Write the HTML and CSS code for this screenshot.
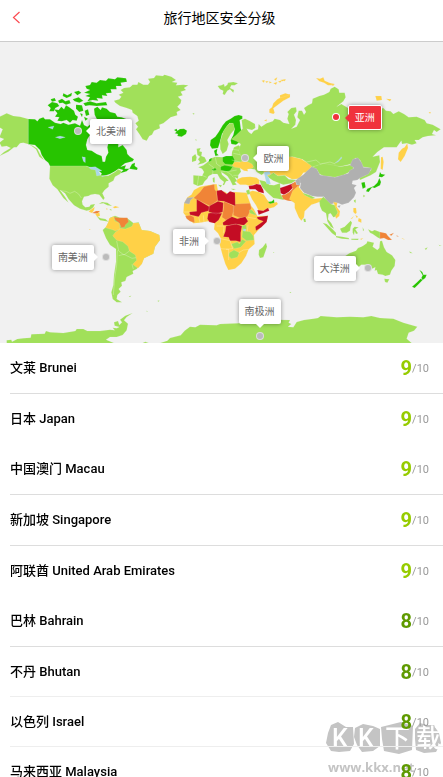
FILE: index.html
```
<!DOCTYPE html>
<html lang="zh-CN">
<head>
  <meta charset="utf-8">
  <meta name="viewport" content="width=device-width, initial-scale=1">
  <title>旅行地区安全分级</title>
  <link rel="stylesheet" href="styles.css">
</head>
<body>
  <header class="topbar">
    <button class="back" type="button" aria-label="返回">
      <svg width="9" height="13" viewBox="0 0 9 13"><path d="M7.5 1 L1.5 6.5 L7.5 12"/></svg>
    </button>
    <h1>旅行地区安全分级</h1>
  </header>

  <section class="map">
    <svg class="world" viewBox="0 126 1329 903" aria-hidden="true">
      <!-- North America -->
      <g transform="translate(0 180)">
        <path class="ok" d="M-2 170 L8 166 20 160 40 168 60 170 85 177 85 253 98 257 112 266 120 282 132 300 118 290 108 268 98 260 86 253 70 248 60 250 50 262 42 262 25 275 -2 288 12 276 32 264 20 258 5 260 -2 248 12 237 -2 232 8 208 -2 202Z"/>
        <path class="safe" d="M85 177 L105 178 112 184 118 176 130 172 135 178 150 178 165 188 182 192 190 188 205 194 225 190 240 197 246 180 252 195 262 200 275 190 290 210 270 225 262 238 258 255 262 270 275 272 290 282 305 288 308 305 315 305 318 290 325 278 322 262 325 250 340 245 355 250 355 262 368 255 380 270 382 282 390 290 402 298 398 304 375 310 362 320 378 316 374 326 388 326 396 312 405 308 404 318 413 324 411 330 388 326 380 334 360 340 370 330 356 326 345 334 330 342 312 348 302 348 305 340 285 325 265 320 258 318 150 318 145 308 135 300 125 285 120 270 105 255 85 253Z"/>
        <path class="safe" d="M256 78 L270 75 275 66 290 68 300 60 318 62 325 55 345 58 352 52 378 55 381 65 362 68 365 78 348 78 350 88 332 88 335 98 318 100 322 108 306 106 308 116 290 114 295 122 278 120 262 124 270 112 256 108 270 102 252 98 270 90 260 86Z"/>
        <path class="safe" d="M162 148 L176 150 184 140 192 148 198 136 208 142 222 152 226 164 234 170 230 182 218 180 210 188 200 180 185 184 172 182 178 172 165 170 172 160Z M143 136 L156 126 172 130 178 138 166 144 162 154 148 154 152 144Z M152 118 L164 114 168 122 156 125Z M174 122 L186 116 196 124 208 120 212 130 198 134 188 128 178 130Z M190 100 L202 106 216 98 214 108 200 114 188 108Z M222 96 L236 92 244 98 232 106Z M218 118 L236 112 250 122 238 128 224 124Z M228 134 L246 136 250 152 238 156 228 146Z M250 130 L270 124 290 130 318 126 322 136 290 138 268 136 256 138Z M254 152 L264 148 268 164 258 168Z M240 160 L248 162 246 172Z M282 146 L292 140 302 150 306 142 320 146 330 156 346 160 352 170 365 172 392 182 388 240 345 235 320 210 300 184 290 176 284 164Z M252 170 L264 176 256 182Z"/>
        <path class="ok" d="M150 318 L258 318 268 322 285 326 302 346 325 347 345 336 355 328 365 334 360 342 345 350 340 362 326 370 326 380 314 390 307 400 314 414 310 420 298 404 285 402 272 404 265 408 252 410 246 424 248 434 256 442 268 440 272 434 285 432 280 442 270 450 260 452 240 446 222 436 206 418 195 400 180 390 196 412 206 428 190 414 172 388 158 376 148 356Z"/>
        <path class="lake" d="M266 322 L286 320 306 332 296 334 302 346 290 348 286 330 272 328Z M246 290 L256 292 256 308 250 304Z M304 348 L324 346 306 350Z M144 202 L162 198 158 208Z M166 232 L180 228 196 232 180 236Z"/>
        <path class="ok" d="M296 432 L306 426 322 428 336 438 322 436 310 430Z M328 448 L334 448 334 452Z"/>
        <path class="fair" d="M338 442 L346 438 358 442 344 445Z"/>
        <path class="seam" d="M180 392 L198 394 210 400 224 394 236 402 244 414"/>
      </g>

      <!-- Greenland and Europe -->
      <g transform="translate(420 180)">
        <path class="ok" d="M-78 122 L-62 118 -56 110 -64 104 -50 98 -58 90 -48 84 -30 82 -22 74 -8 74 -5 66 10 74 24 74 30 66 24 56 42 54 48 46 68 48 74 44 94 50 108 60 96 66 112 68 108 76 130 74 145 76 132 84 138 90 122 95 128 106 114 110 124 120 122 130 112 140 122 150 110 156 112 166 92 172 82 180 70 190 58 194 60 205 42 212 36 224 28 228 20 242 8 238 -2 222 -12 208 -6 200 -14 190 -4 182 -8 168 -22 158 -24 150 -40 144 -60 138 -74 128Z"/>
        <path class="safe" d="M102 210 L110 206 112 212 120 207 132 206 141 212 138 222 125 230 112 228 114 222 104 220 110 215Z"/>
        <path class="ok" d="M233 78 L244 76 252 72 254 80 262 74 264 68 280 66 294 70 284 76 274 76 270 84 282 90 280 98 270 88 262 92 254 105 248 102 250 92 240 88Z M166 236 L170 240 168 243Z M157 160 L163 160 162 164Z"/>
        <path class="fair" d="M450 102 L430 108 412 118 400 130 396 142 388 148 388 158 400 162 404 158 400 145 412 136 430 122 450 112Z M365 62 L374 60 372 68Z M376 64 L386 64 380 69Z M388 64 L396 68 388 70Z M402 58 L412 52 408 62Z M400 70 L412 66 408 74Z M414 64 L426 62 420 68Z M428 60 L438 58 434 64Z M372 182 L380 178 380 184Z"/>
        <path class="safe" d="M212 240 L226 230 236 216 248 196 258 184 272 176 284 168 296 165 307 168 307 176 299 180 302 205 308 222 304 242 288 254 274 252 272 240 280 225 284 208 278 190 268 190 256 206 246 222 240 246 234 264 216 266 210 256Z"/>
        <path class="ok" d="M270 190 L280 190 284 208 272 222 262 240 266 252 260 272 248 282 241 268 240 246 250 214 262 196Z"/>
        <path class="safe" d="M222 272 L232 266 230 280 236 286 226 288Z"/>
        <path class="ok" d="M170 266 L182 264 178 274 186 276 184 288 194 292 200 304 190 310 172 314 180 306 174 298 180 290 172 284Z M156 290 L166 282 170 292 168 302 156 306Z"/>
        <path class="ok" d="M160 346 L186 348 192 336 186 326 175 322 190 316 206 304 210 296 226 290 250 292 275 290 276 276 282 262 296 256 308 268 330 284 356 300 356 330 330 326 300 325 303 335 295 345 294 356 284 352 292 364 284 366 290 374 278 376 270 360 262 348 244 336 246 344 260 356 266 362 258 364 252 376 248 374 252 366 240 356 232 342 218 342 206 348 202 356 194 364 188 374 174 378 160 372Z M234 374 L246 376 242 382Z M218 354 L224 352 224 368 219 366Z M272 386 L288 387 280 390Z"/>
        <path class="safe" d="M248 292 L258 288 278 288 284 300 279 314 255 312 248 304Z M242 320 L254 316 278 320 270 332 258 334 242 330Z M215 328 L226 324 230 330 220 332Z M208 298 L216 294 214 302 206 306Z"/>
        <path class="fair" d="M276 316 L284 306 300 306 310 303 326 304 344 314 338 324 322 328 324 334 312 332 300 324 284 322Z M292 358 L306 352 330 350 350 353 358 360 358 372 340 374 330 378 318 374 300 374 290 366Z"/>
        <path class="seam" d="M186 346 L200 352 M176 348 L172 376 M206 312 L220 322 218 342 M226 292 L230 312 242 320 M242 334 L258 334 272 342 280 352 M268 334 L290 330 M280 346 L296 346 M275 300 L300 306 M280 280 L305 285 M278 268 L304 272"/>
      </g>

      <!-- Russia, Central and East Asia -->
      <g transform="translate(840 180)">
        <path class="ok" d="M-115 180 L-105 176 -92 182 -75 192 -74 204 -84 210 -100 206 -94 216 -86 222 -78 212 -66 208 -64 192 -56 200 -40 190 -22 184 -16 176 0 180 10 188 28 192 22 176 26 162 22 156 34 144 48 142 50 154 42 164 48 180 46 194 34 206 50 200 60 180 52 172 56 152 66 152 72 164 78 156 72 144 84 136 96 130 98 116 118 108 132 104 148 96 152 86 164 80 176 88 178 98 194 98 197 112 190 124 170 140 184 132 194 138 208 146 302 146 310 144 318 152 332 154 340 162 356 154 372 162 386 172 410 170 434 180 440 190 458 194 482 208 470 216 462 210 456 222 468 226 444 228 428 232 416 240 404 240 410 250 396 254 380 250 366 252 364 242 350 262 312 262 292 276 278 290 298 286 300 306 288 336 272 346 262 350 240 360 238 352 256 346 262 338 274 330 270 324 248 320 240 300 226 294 214 312 180 320 130 312 95 322 66 298 36 290 0 300 -55 345 -70 336 -84 312 -114 296 -124 272 -118 252 -130 244 -146 238 -128 222 -112 206Z"/>
        <path class="fair" d="M382 250 L384 264 374 288 362 306 354 298 356 278 366 266 374 262Z M303 292 L308 290 311 306 308 330 302 326Z M108 54 L120 56 130 52 134 62 148 68 164 72 160 76 144 76 132 68 118 64Z M286 108 L304 108 306 120 290 122Z M318 116 L334 118 330 124Z M446 156 L453 157 450 161Z M0 106 L16 100 30 104 8 112 0 114Z M0 60 L18 58 8 64Z M152 70 L164 74 158 78Z"/>
        <path class="fair" d="M-50 335 L-30 318 0 292 36 290 66 298 95 318 86 336 70 338 58 356 36 358 14 346 -6 348 -20 338 -38 352Z"/>
        <path class="ok" d="M-38 350 L-20 338 -6 348 14 346 26 358 50 360 34 370 10 374 -20 362Z"/>
        <path class="ok" d="M95 322 L130 310 165 316 180 320 214 314 222 324 208 336 190 346 165 352 130 348 118 342 110 328Z"/>
        <path class="gray" d="M50 358 L70 344 80 334 95 320 110 326 120 345 165 352 205 340 208 332 222 324 210 316 218 298 234 293 245 308 250 322 275 324 266 342 240 354 232 360 218 362 216 372 230 376 222 384 228 398 222 412 206 428 186 434 176 430 166 428 150 434 140 424 132 410 112 410 96 408 72 398 60 384 62 370Z M172 438 L182 436 178 444Z"/>
        <path class="safe" d="M244 368 L254 366 257 382 248 386Z M300 336 L304 342 316 344 306 352 296 350 298 344Z M298 354 L303 366 300 376 284 384 276 382 266 396 258 394 262 386 282 378 292 368Z"/>
        <path class="ok" d="M222 422 L227 420 226 430Z M250 404 L256 408 250 412Z"/>
        <path class="lake" d="M164 310 L176 300 184 290 186 294 174 306Z"/>
        <path class="seam" d="M66 298 L80 306 108 300 122 312 150 306 166 312"/>
      </g>

      <!-- South America -->
      <g transform="translate(0 585)">
        <path class="ok" d="M308 105 L320 94 330 68 345 62 360 68 382 70 400 84 416 82 425 105 450 108 478 120 480 135 465 155 460 176 432 190 424 208 410 222 398 228 400 236 380 246 376 258 364 262 366 272 356 282 362 290 352 300 350 312 366 322 350 322 338 312 334 292 340 270 342 240 348 200 348 162 330 150 318 130Z"/>
        <path class="fair" d="M338 122 L346 112 362 100 376 102 396 94 400 84 416 84 425 105 450 108 478 120 480 135 465 155 460 176 432 190 426 206 414 220 398 208 410 196 406 180 388 168 384 154 368 140 350 136Z M316 98 L324 84 328 70 342 64 344 78 358 84 360 102 346 108 338 104Z"/>
        <path class="bad" d="M342 66 L356 68 382 68 386 80 376 90 374 96 364 98 358 84 346 76Z M276 54 L288 48 300 48 292 56Z"/>
        <path class="fair" d="M266 50 L272 44 284 36 282 46 276 54Z M286 58 L298 52 300 62 292 66Z M267 102 L272 103 269 105Z M318 40 L324 42 320 44Z"/>
        <path class="ok" d="M290 64 L302 70 316 72 326 80 314 78 300 76Z M386 304 L394 302 390 306Z M474 316 L479 317 476 319Z"/>
        <path class="seam" d="M352 166 L350 210 344 250 340 300 M350 138 L356 168 372 180 388 168 M356 182 L372 178 396 190 408 188 M396 208 L400 222"/>
        <path class="ok" d="M20 436 L34 434 36 440 52 432 70 430 92 428 94 418 134 416 138 408 150 412 190 414 226 408 230 402 250 402 262 408 300 408 330 404 344 406 338 398 350 400 358 396 344 392 342 382 354 378 358 390 366 382 360 374 376 362 398 354 380 366 372 376 384 386 380 406 368 420 350 426 330 426 318 434 344 445 20 445Z M428 444 L436 440 446 444Z M440 347 L444 349 440 350Z"/>
      </g>

      <!-- Africa and the Middle East -->
      <g transform="translate(450 510)">
        <path class="ok" d="M328 30 L345 34 358 44 372 46 390 40 392 72 402 90 384 86 370 84 350 66 336 50Z"/>
        <path class="lake" d="M342 6 L358 4 362 12 352 16 358 26 362 42 350 42 346 26Z"/>
        <path class="dire" d="M296 48 L310 46 320 42 332 44 340 60 342 70 326 66 316 58 298 58Z M390 54 L408 48 424 42 432 38 430 52 416 66 402 74 392 70Z"/>
        <path class="bad" d="M394 76 L404 74 418 66 428 56 424 44 436 34 440 44 450 46 440 56 438 72 428 94 414 92 400 88Z"/>
        <path class="fair" d="M296 66 L308 62 326 66 342 74 352 90 362 100 380 96 384 102 372 112 354 116 342 122 326 122 318 106 306 88Z"/>
        <path class="dire" d="M322 120 L340 122 354 113 358 122 342 128 326 134Z"/>
        <path class="safe" d="M354 96 L366 94 372 88 373 98 360 101Z"/>
        <path class="ok" d="M288 62 L298 58 300 72 292 74Z"/>
        <path class="fair" d="M102 100 L112 82 124 74 132 60 150 50 172 46 200 42 204 62 225 65 234 72 255 66 290 68 294 82 304 108 312 118 322 138 354 137 350 155 330 175 312 195 314 222 296 238 288 258 274 280 255 296 235 300 226 282 216 250 208 220 212 205 204 190 192 178 194 160 175 154 150 158 130 160 112 145 100 128Z"/>
        <path class="bad" d="M131 84 L150 66 162 50 193 43 194 58 200 66 202 92 180 108 160 98Z M222 94 L252 108 250 124 246 142 228 150 216 142 220 120Z M256 102 L300 100 304 114 298 128 292 140 270 144 250 136 250 110Z M106 138 L122 136 132 142 134 158 120 154 110 146Z"/>
        <path class="dire" d="M200 62 L214 60 230 72 240 64 255 68 256 108 222 94 203 92Z M140 88 L178 110 176 122 154 128 146 140 120 134 118 126 140 124Z M178 108 L204 94 220 98 218 126 198 132 176 126Z M175 130 L190 128 216 130 206 150 194 160 178 156 172 146Z M218 158 L232 148 246 140 262 146 286 140 294 154 282 166 256 162 236 166 220 166Z M228 168 L258 162 276 168 272 188 272 216 258 212 240 212 236 202 220 200 226 184Z M320 142 L354 137 350 156 334 172 318 182 316 170 340 154 324 148Z"/>
        <path class="gray" d="M102 100 L112 83 132 82 122 90 118 102Z M436 30 L450 28 450 46 440 44Z"/>
        <path class="ok" d="M278 182 L300 185 310 198 312 210 290 212 276 202Z M244 222 L262 216 268 222 276 208 288 214 272 232 252 236Z M238 248 L252 240 268 248 262 262 244 266 236 258Z M298 120 L306 120 320 136 300 130Z M276 168 L288 164 290 178 278 182Z M327 240 L338 232 348 218 351 230 340 262 330 264 326 254Z M369 246 L373 247 371 249Z"/>
        <path class="lake" d="M280 176 L288 178 286 184 280 182Z"/>
        <path class="seam" d="M102 126 L118 126 M146 140 L150 158 M160 136 L162 156 M212 206 L240 212 248 236 228 238 M212 236 L236 238 236 270 M266 248 L280 240 296 238 M294 142 L318 146 M292 184 L294 164 M200 168 L222 168 220 190"/>
        <!-- Antarctica -->
        <path class="ok" d="M28 520 L52 512 60 504 92 496 104 482 120 470 136 472 150 464 200 466 210 462 265 460 300 448 420 450 416 458 424 462 414 470 430 472 440 456 462 450 490 446 504 444 512 438 560 442 600 440 640 442 664 438 690 444 730 446 760 458 802 470 792 482 776 488 770 506 786 520Z M418 366 L424 366 422 369Z M22 392 L28 393 25 395Z"/>
      </g>

      <!-- South Asia and Oceania -->
      <g transform="translate(870 510)">
        <path class="fair" d="M8 62 L24 48 36 64 46 76 72 86 96 84 98 92 78 100 64 104 44 124 42 142 34 152 26 142 14 114 14 100 -2 88Z"/>
        <path class="ok" d="M38 68 L60 76 76 84 66 86 44 76Z M88 94 L100 80 112 92 122 102 136 106 144 124 142 138 130 142 122 130 116 132 114 148 124 160 132 176 122 170 112 154 108 130 96 122 90 108Z M40 146 L46 146 48 156 42 156Z"/>
        <path class="fair" d="M130 96 L142 98 140 110 150 124 148 138 138 146 136 138 144 128 136 112Z M190 114 L198 114 200 128 196 132 190 126Z M196 134 L204 140 200 144Z M206 144 L214 148 214 158 204 154Z M182 146 L192 138 186 146Z"/>
        <path class="ok" d="M98 158 L110 162 128 178 138 188 138 198 126 190 112 174Z M138 198 L156 200 176 204 178 208 156 206 138 202Z M184 206 L206 206 204 210 184 209Z M150 176 L164 170 182 152 186 158 182 170 180 182 170 188 156 188Z M188 176 L194 170 206 172 196 178 204 190 198 192 194 184 192 196 188 188Z M218 172 L222 180 219 184Z M234 178 L246 184 254 180 270 186 270 206 262 202 248 192 240 188Z M191 92 L197 88 196 98Z"/>
        <path class="bad" d="M270 186 L288 190 294 198 306 210 294 210 282 204 270 206Z M298 194 L312 188 304 197Z M320 196 L327 200 320 199Z"/>
        <path class="fair" d="M210 207 L220 204 214 209Z M334 203 L346 209 338 207Z"/>
        <path class="ok" d="M160 262 L178 250 198 242 204 234 214 230 222 226 230 220 232 214 252 218 248 230 262 240 268 234 270 214 276 212 282 232 290 246 306 256 316 270 314 288 304 302 300 314 286 318 278 314 264 312 260 300 254 302 256 292 246 296 236 284 214 284 200 296 176 300Z M283 326 L298 328 292 338 285 336Z M358 244 L368 250 360 249Z M404 236 L413 232 408 240Z M446 224 L455 227 448 227Z"/>
        <path class="safe" d="M388 299 L397 306 400 314 410 314 406 324 398 330 394 324 398 316Z M392 326 L398 330 384 344 374 354 366 350 378 340Z"/>
      </g>
    </svg>

    <button class="pin north-america to-right" type="button"><span>北美洲</span></button>
    <button class="pin europe to-right" type="button"><span>欧洲</span></button>
    <button class="pin asia to-right active" type="button"><span>亚洲</span></button>
    <button class="pin africa to-left" type="button"><span>非洲</span></button>
    <button class="pin south-america to-left" type="button"><span>南美洲</span></button>
    <button class="pin oceania to-left" type="button"><span>大洋洲</span></button>
    <button class="pin antarctica to-top" type="button"><span>南极洲</span></button>
  </section>

  <ul class="places">
    <li class="line"><span class="name">文莱 Brunei</span><span class="score high"><b>9</b>/10</span></li>
    <li><span class="name">日本 Japan</span><span class="score high"><b>9</b>/10</span></li>
    <li class="line"><span class="name">中国澳门 Macau</span><span class="score high"><b>9</b>/10</span></li>
    <li class="line"><span class="name">新加坡 Singapore</span><span class="score high"><b>9</b>/10</span></li>
    <li><span class="name">阿联酋 United Arab Emirates</span><span class="score high"><b>9</b>/10</span></li>
    <li class="line"><span class="name">巴林 Bahrain</span><span class="score"><b>8</b>/10</span></li>
    <li class="faint"><span class="name">不丹 Bhutan</span><span class="score"><b>8</b>/10</span></li>
    <li class="faint"><span class="name">以色列 Israel</span><span class="score"><b>8</b>/10</span></li>
    <li><span class="name">马来西亚 Malaysia</span><span class="score"><b>8</b>/10</span></li>
  </ul>

  <svg class="watermark" width="120" height="56" viewBox="0 0 120 56">
    <path d="M8 4 L15 1 23 6 30 6 31 23 27 30 16 31 8 30 3 22 5 12Z M32 7 L40 3 50 5 57 8 57 25 50 30 39 31 34 24 31 16Z M58 6 L70 3 78 1 90 5 89 29 76 33 61 30 59 18Z M92 8 L97 2 104 4 111 4 116 12 118 22 113 31 101 32 93 29 92 18Z"/>
    <text class="mark" x="9" y="26">K</text>
    <text class="mark" x="35" y="26">K</text>
    <text class="mark" x="62" y="26">下</text>
    <text class="mark" x="93" y="26">载</text>
    <text class="site" x="5" y="51">www.kkx.net</text>
  </svg>
</body>
</html>
```
FILE: styles.css
```
* { box-sizing: border-box; }
body {
  display: flex;
  flex-direction: column;
  height: 100vh;
  margin: 0;
  overflow: hidden;
  background: #fff;
  color: #000;
  font-family: Roboto, "Noto Sans CJK SC", sans-serif;
}
button {
  padding: 0;
  border: 0;
  background: none;
  font: inherit;
  cursor: pointer;
}

/* top bar */
.topbar {
  display: grid;
  grid-template-columns: 40px 1fr 44px;
  align-items: center;
  flex: none;
  height: 42px;
  padding-bottom: 6px;
  border-bottom: 1px solid #ccc;
}
.topbar h1 {
  margin: 0;
  font-size: 14px;
  font-weight: 400;
  line-height: 20px;
  text-align: center;
}
.back {
  display: flex;
  align-items: center;
  height: 35px;
  padding-left: 12px;
}
.back path { fill: none; stroke: #fb4a50; stroke-width: 1.2; }

/* map */
.map {
  position: relative;
  flex: none;
  background: #f1f1f1;
}
.world { display: block; width: 100%; }
.world path { stroke: #f1f1f1; stroke-opacity: .4; stroke-width: 1; }
.world .safe { fill: #27c400; }
.world .ok { fill: #a1e05a; }
.world .fair { fill: #ffd147; }
.world .bad { fill: #f08437; }
.world .dire { fill: #c40d24; }
.world .gray { fill: #b0b0b0; }
.world .lake { fill: #a9d7e8; }
.world .seam { fill: none; stroke: #fff; stroke-width: 2; }

/* each pin sits on its dot, the label hangs off one side */
.pin {
  position: absolute;
  width: 6px;
  height: 6px;
  margin: -3px 0 0 -3px;
  border-radius: 50%;
  background: #bbb;
  box-shadow: 0 0 0 1px #ddd;
}
.pin span {
  position: absolute;
  top: -9px;
  height: 25px;
  padding: 0 6px;
  border-radius: 2px;
  background: #fff;
  box-shadow: 0 0 4px rgba(0, 0, 0, .4);
  color: #666;
  font-size: 10px;
  line-height: 25px;
  white-space: nowrap;
}
.pin span::after {
  content: "";
  position: absolute;
  top: 8px;
  border: 4px solid transparent;
}
.to-right span { left: 15px; }
.to-right span::after { right: 100%; border-right-color: #fff; }
.to-left span { right: 15px; }
.to-left span::after { left: 100%; border-left-color: #fff; }
.to-top span { top: auto; bottom: 15px; left: 3px; transform: translateX(-50%); }
.to-top span::after { top: 100%; left: 50%; margin-left: -4px; border-top-color: #fff; }

.active { background: #f0323c; box-shadow: 0 0 0 1px #fff; }
.active span { background: #f0323c; color: #fff; border: 1px solid #fff; line-height: 23px; }
.active span::after { border-right-color: #f0323c; }

.north-america { left: 17.6%; top: 29.7%; }
.europe { left: 55.4%; top: 38.6%; }
.asia { left: 75.8%; top: 25%; }
.africa { left: 49%; top: 66%; }
.south-america { left: 23.9%; top: 71.3%; }
.oceania { left: 83%; top: 75%; }
.antarctica { left: 58.6%; top: 97.7%; }

/* list */
.places {
  position: relative;
  z-index: 1;
  flex: 1;
  min-height: 0;
  margin: 0;
  padding: 0 0 0 10px;
  overflow: auto;
  scrollbar-width: none;
  list-style: none;
}
.places li {
  display: flex;
  align-items: center;
  justify-content: space-between;
  height: 50px;
  padding-right: 14px;
  font-size: 13px;
  font-weight: 500;
}
.places .line { height: 51px; border-bottom: 1px solid #ddd; }
.places .faint { border-bottom: 1px solid #eee; }
.name { padding-bottom: 3px; }
.score {
  color: #999;
  font-size: 11px;
  font-weight: 400;
}
.score b {
  color: #5f9a00;
  font-size: 20px;
  font-weight: 700;
  vertical-align: -3px;
}
.high b { color: #96cc00; }

.watermark {
  position: fixed;
  right: 0;
  bottom: 0;
}
.watermark path { fill: #c4c4c4; }
.watermark .mark { fill: #fff; font-size: 25px; font-weight: 500; }
.watermark .site {
  fill: #c4c4c4;
  font-family: "Open Sans", sans-serif;
  font-size: 13px;
  font-weight: 700;
}
```
